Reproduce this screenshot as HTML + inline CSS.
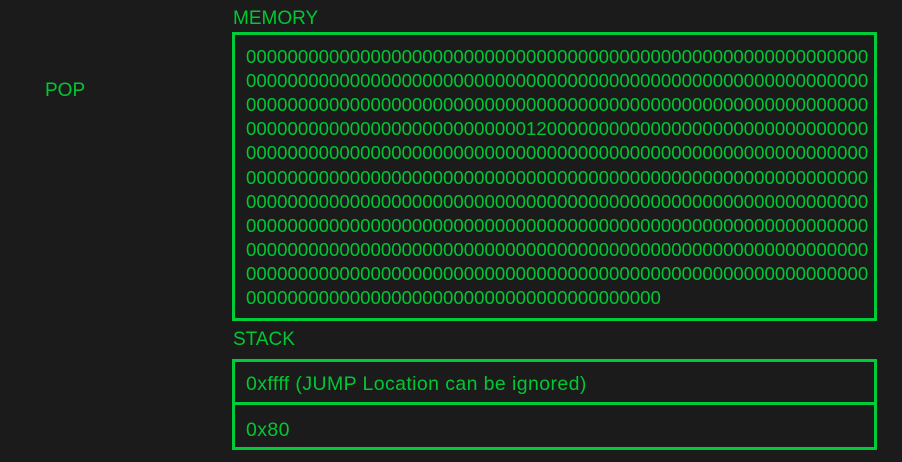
<!DOCTYPE html>
<html><head><style>
body{margin:0;background:#1b1b1b;width:902px;height:462px;overflow:hidden;font-family:"Liberation Sans",sans-serif;color:#00c832;position:relative}
.a{position:absolute}
.lbl{font-size:19px;line-height:20px}
.mem{left:232px;top:32px;width:639px;height:283px;border:3px solid #00cc3a}
.mem div{position:absolute;left:11px;font-size:18.6px;line-height:20px;letter-spacing:0.03px;white-space:pre}
.box{left:232px;width:639px;border:3px solid #00cc3a;font-size:19.5px;letter-spacing:0.4px}
.box span{position:absolute;left:11px;top:12px;line-height:20px}
</style></head><body>
<div class="a lbl" style="left:45px;top:81px">POP</div>
<div class="a lbl" style="left:233px;top:9px">MEMORY</div>
<div class="a mem" id="m"></div>
<div class="a lbl" style="left:233px;top:330px">STACK</div>
<div class="a box" style="top:359px;height:40px"><span>0xffff (JUMP Location can be ignored)</span></div>
<div class="a box" style="top:405px;height:42px;border-top:none"><span style="top:15px">0x80</span></div>
<script>
var m=document.getElementById('m'),z='0'.repeat(60);
var L=[z,z,z,'0'.repeat(27)+'12'+'0'.repeat(31),z,z,z,z,z,z,'0'.repeat(40)];
L.forEach(function(s,i){var d=document.createElement('div');d.textContent=s;d.style.top=(12+i*24.1)+'px';m.appendChild(d);});
</script>
</body></html>
